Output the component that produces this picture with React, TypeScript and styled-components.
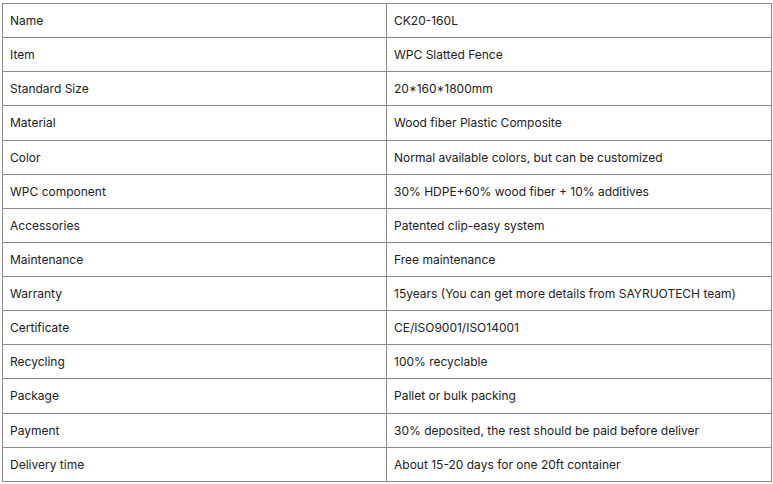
import styled, { createGlobalStyle } from "styled-components";

const GlobalStyle = createGlobalStyle`
    html, body {
        margin: 0;
        padding: 0;
        background: #fff;
    }
`;

const Wrap = styled.div`
    padding: 3px 2px 0 2px;
    font-family: "Inter", "Liberation Sans", sans-serif;
`;

const Table = styled.table`
    width: 770px;
    border-collapse: collapse;
    table-layout: fixed;
    td {
        border: 1px solid #8c8c8c;
        height: 34.14px;
        padding: 0 0 0 7px;
        font-size: 12px;
        color: #222;
        vertical-align: middle;
        box-sizing: border-box;
    }
    td:first-child {
        width: 384px;
    }
`;

const rows: [string, string][] = [
    ["Name", "CK20-160L"],
    ["Item", "WPC Slatted Fence"],
    ["Standard Size", "20*160*1800mm"],
    ["Material", "Wood fiber Plastic Composite"],
    ["Color", "Normal available colors, but can be customized"],
    ["WPC component", "30% HDPE+60% wood fiber + 10% additives"],
    ["Accessories", "Patented clip-easy system"],
    ["Maintenance", "Free maintenance"],
    ["Warranty", "15years (You can get more details from SAYRUOTECH team)"],
    ["Certificate", "CE/ISO9001/ISO14001"],
    ["Recycling", "100% recyclable"],
    ["Package", "Pallet or bulk packing"],
    ["Payment", "30% deposited, the rest should be paid before deliver"],
    ["Delivery time", "About 15-20 days for one 20ft container"],
];

export default function App() {
    return (
        <Wrap>
            <GlobalStyle />
            <Table>
                <tbody>
                    {rows.map(([k, v]) => (
                        <tr key={k}>
                            <td>{k}</td>
                            <td>{v}</td>
                        </tr>
                    ))}
                </tbody>
            </Table>
        </Wrap>
    );
}
